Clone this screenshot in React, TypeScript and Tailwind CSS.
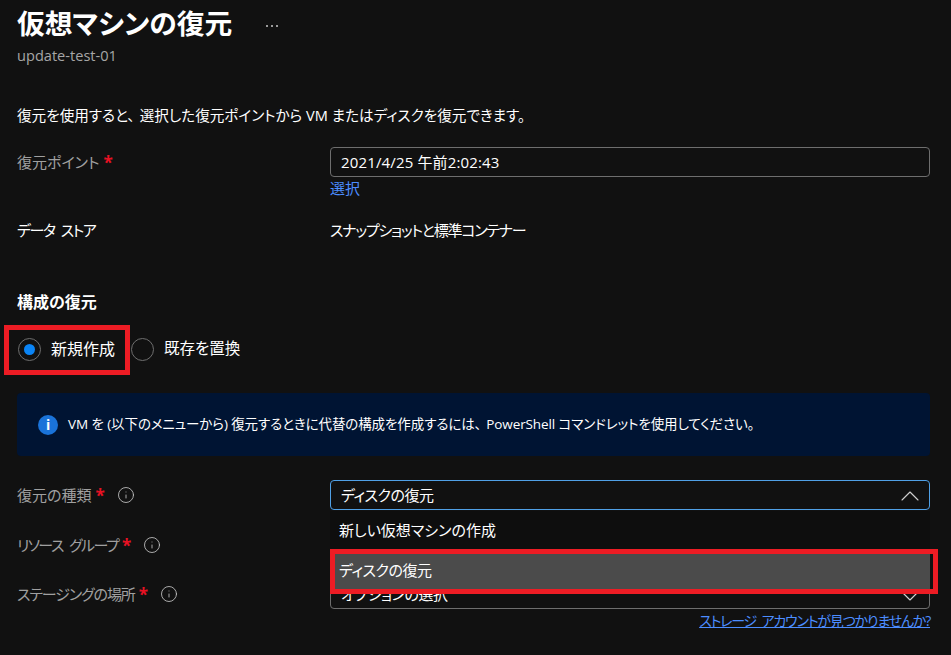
import { ChevronDown, ChevronUp, Info } from "lucide-react";

const font = "font-['Open_Sans','Noto_Sans_CJK_JP',sans-serif] [font-feature-settings:'palt']";

function Star() {
  return <span className="ml-1 text-[17px] font-bold leading-none tracking-normal text-[#e81123]">*</span>;
}

function Hint() {
  return <Info size={18} strokeWidth={1.1} className="ml-3 text-[#c8c8c8]" />;
}

function Row({ className, children }: { className: string; children: React.ReactNode }) {
  return <div className={`flex items-center pl-[17px] pr-[21px] ${className}`}>{children}</div>;
}

function Dot() {
  return <span className="h-[2px] w-[2px] rounded-full bg-[#c8c8c8]" />;
}

export default function App() {
  return (
    <div className={`relative h-[655px] w-[951px] overflow-hidden bg-[#111111] text-white ${font}`}>
      <div className="flex h-[44px] items-center pl-[17px] pt-1">
        <h1 className="text-[27.75px] font-bold leading-none">仮想マシンの復元</h1>
        <span className="ml-[34px] flex gap-[3px] pt-1">
          <Dot />
          <Dot />
          <Dot />
        </span>
      </div>
      <p className="pl-[17px] pt-[2px] text-[14.6px] leading-[18px] text-[#a6a6a6]">update-test-01</p>

      <p className="mt-[41px] pl-[17px] text-[14.6px] leading-[20px]">
        復元を使用すると<span className="pr-[5px]">、</span>選択した復元ポイントから VM またはディスクを復元できます。
      </p>

      <Row className="mt-[22px] items-start">
        <div className="flex h-[30px] w-[313px] items-center text-[15px] text-[#a0a0a0]">
          復元ポイント<Star />
        </div>
        <div className="flex-1">
          <div className="flex h-[30px] items-center rounded-sm border border-[#6e6e6e] px-2.5 text-[15px] tracking-[0.15px]">
            2021/4/25 午前2:02:43
          </div>
          <a className="block text-[15px] leading-[22px] text-[#4c8dff]">選択</a>
        </div>
      </Row>

      <Row className="mt-[21px] h-[20px] text-[15px]">
        <div className="w-[313px] tracking-[-1.5px] [word-spacing:4px]">データ ストア</div>
        <div className="tracking-[-1.25px]">スナップショットと標準コンテナー</div>
      </Row>

      <h2 className="mt-[52px] pl-[17px] text-[16px] font-bold leading-[20px]">構成の復元</h2>

      <div className="mt-[25px] flex h-[24px] items-center pl-[18px]">
        <span className="flex h-[23px] w-[23px] items-center justify-center rounded-full border border-[#6e6e6e]">
          <span className="h-[11px] w-[11px] rounded-full bg-[#0a84f5]" />
        </span>
        <span className="ml-[10px] text-[16px]">新規作成</span>
        <span className="ml-[16px] h-[23px] w-[23px] rounded-full border border-[#6e6e6e]" />
        <span className="ml-[10px] text-[15.5px]">既存を置換</span>
      </div>

      <div className="ml-[17px] mr-[21px] mt-[32px] flex h-[63px] items-center rounded-sm bg-[#001433] pl-[21px] text-[13.5px] tracking-[-0.1px]">
        <span className="flex h-[20px] w-[20px] items-center justify-center rounded-full bg-[#1a73d9] text-sm font-bold leading-none">
          i
        </span>
        <span className="ml-[10px]">
          VM を (以下のメニューから) 復元するときに代替の構成を作成するには<span className="pr-[5px]">、</span>PowerShell コマンドレットを使用してください。
        </span>
      </div>

      <Row className="mt-[24px] items-start">
        <div className="flex h-[30px] w-[313px] items-center text-[15px] text-[#a0a0a0]">
          復元の種類<Star />
          <Hint />
        </div>
        <div className="flex h-[30px] flex-1 items-center justify-between rounded-sm border border-[#50a0e6] pl-2.5 pr-[3px] text-[15px] tracking-[-0.5px]">
          ディスクの復元
          <ChevronUp size={32} strokeWidth={0.8} className="mt-px text-[#d0d0d0]" />
        </div>
      </Row>

      <Row className="mt-[20px] h-[30px]">
        <div className="flex w-[313px] items-center text-[15px] tracking-[-1.6px] text-[#a0a0a0] [word-spacing:4px]">
          リソース グループ<Star />
          <Hint />
        </div>
      </Row>

      <Row className="mt-[19px] items-start">
        <div className="flex h-[30px] w-[313px] items-center text-[15px] tracking-[-1.1px] text-[#a0a0a0]">
          ステージングの場所<Star />
          <Hint />
        </div>
        <div className="flex-1">
          <div className="flex h-[30px] items-center justify-between overflow-hidden rounded-sm border border-[#6e6e6e] pl-2.5 pr-[3px] text-[15px] tracking-[-0.5px]">
            <span className="pt-px">オプションの選択</span>
            <ChevronDown size={32} strokeWidth={0.8} className="mt-[3px] text-[#d0d0d0]" />
          </div>
          <a className="block text-right text-[14px] leading-[24px] tracking-[-1.2px] text-[#4c8dff] underline [word-spacing:3px]">
            ストレージ アカウントが見つかりませんか?
          </a>
        </div>
      </Row>

      {/* open dropdown list */}
      <div className="absolute left-[330px] top-[511px] h-[79px] w-[600px] bg-[#0e0e0e] text-[15px]">
        <div className="flex h-[39px] items-center pl-[9px]">新しい仮想マシンの作成</div>
        <div className="flex h-[40px] items-center bg-[#4b4b4b] pl-[9px] tracking-[-0.5px]">ディスクの復元</div>
      </div>

      {/* annotation boxes */}
      <div className="absolute left-[4px] top-[325px] h-[50px] w-[126px] border-[5px] border-[#ed1c24]" />
      <div className="absolute left-[330px] top-[549px] h-[45px] w-[608px] border-[5px] border-[#ed1c24]" />
    </div>
  );
}
